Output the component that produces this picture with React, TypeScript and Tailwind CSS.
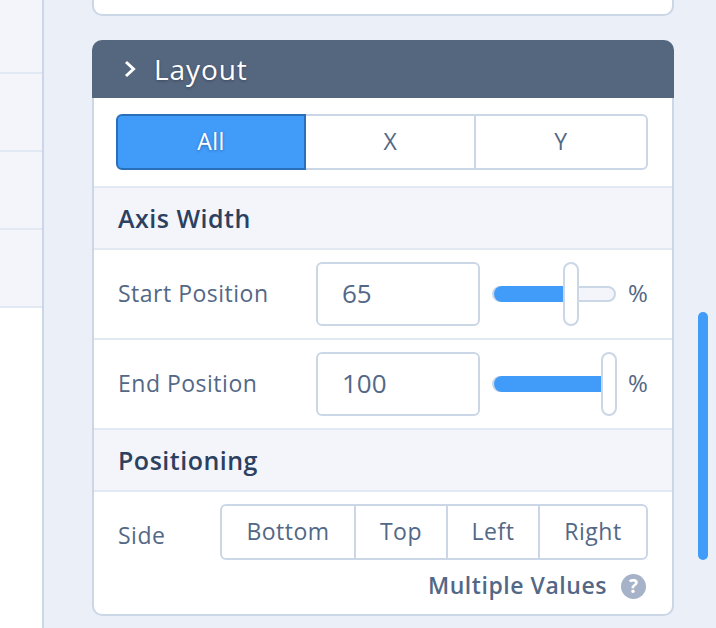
const SliderRow = ({ label, value, thumbLeft }: { label: string; value: string; thumbLeft: number }) => (
  <div className="flex h-[90px] items-center border-b-2 border-[#e3e9f3] pl-[24px]">
    <span className="w-[198px] pb-[2px] text-[23px] tracking-[0.5px] text-[#536886]">{label}</span>
    <div className="flex h-[64px] w-[164px] items-center rounded-[6px] border-2 border-[#cbd6e6] pb-[2px] pl-[24px] text-[26px] text-[#536886]">
      {value}
    </div>
    <div className="relative ml-[12px] h-[64px] w-[126px]">
      <div className="absolute left-0 top-[24px] h-[16px] w-[124px] rounded-full border-2 border-[#cbd6e6] bg-[#f3f5fb]" />
      <div className="absolute left-[2px] top-[24px] h-[16px] rounded-l-full bg-[#419bf9]" style={{ width: thumbLeft - 2 }} />
      <div
        className="absolute top-0 h-[64px] w-[16px] rounded-full border-2 border-[#cbd6e6] bg-white"
        style={{ left: thumbLeft }}
      />
    </div>
    <span className="ml-[10px] pb-[2px] text-[24px] text-[#536886]">%</span>
  </div>
)

const SectionHeader = ({ title }: { title: string }) => (
  <div className="flex h-[62px] items-center border-b-2 border-[#e3e9f3] bg-[#f3f5fb] pl-[24px] pt-[2px] text-[25px] font-semibold tracking-[0.5px] text-[#2c4060]">
    {title}
  </div>
)

const axisButtons = [
  { label: 'X', width: 'w-[170px]' },
  { label: 'Y', width: 'flex-1' },
]

const sideButtons = [
  { label: 'Bottom', width: 'w-[134px]', border: 'border-r-2' },
  { label: 'Top', width: 'w-[92px]', border: 'border-r-2' },
  { label: 'Left', width: 'w-[92px]', border: 'border-r-2' },
  { label: 'Right', width: 'flex-1', border: '' },
]

export default function App() {
  return (
    <div className="flex h-[628px] w-[716px] overflow-hidden bg-[#ebf0f8] font-['Open_Sans',sans-serif]">
      {/* Left list */}
      <div className="h-full w-[44px] shrink-0 border-r-2 border-[#cbd6e6] bg-white">
        <div className="h-[74px] border-b-2 border-[#e3e9f3] bg-[#f3f5fb]" />
        <div className="h-[78px] border-b-2 border-[#e3e9f3] bg-[#f3f5fb]" />
        <div className="h-[78px] border-b-2 border-[#e3e9f3] bg-[#f3f5fb]" />
        <div className="h-[78px] border-b-2 border-[#e3e9f3] bg-[#f3f5fb]" />
      </div>

      {/* Panel */}
      <div className="relative flex-1 pl-[48px]">
        <div className="h-[16px] w-[582px] rounded-b-[10px] border-x-2 border-b-2 border-[#cbd6e6] bg-white" />

        <div className="mt-[24px] w-[582px]">
          <div className="flex h-[58px] items-center rounded-t-[10px] bg-[#55667f] pl-[32px] text-[28px] font-medium tracking-[0.9px] text-white [text-shadow:0_1px_3px_rgba(0,0,0,0.3)]">
            <svg width="12" height="18" viewBox="0 0 12 18" fill="none" stroke="white" strokeWidth="3" className="mr-[18px]">
              <polyline points="2,2 9.5,9 2,16" />
            </svg>
            Layout
          </div>

          <div className="rounded-b-[10px] border-x-2 border-b-2 border-[#cbd6e6] bg-white">
            <div className="flex h-[90px] items-center border-b-2 border-[#e3e9f3] pl-[22px]">
              <div className="flex h-[56px] w-[532px]">
                <div className="flex w-[190px] items-center justify-center rounded-l-[6px] border-2 border-[#2a70b8] bg-[#419bf9] pb-[2px] text-[23px] font-medium tracking-[0.5px] text-white [text-shadow:0_1px_3px_rgba(0,0,0,0.3)]">
                  All
                </div>
                <div className="flex flex-1 rounded-r-[6px] border-y-2 border-r-2 border-[#cbd6e6] text-[23px] tracking-[0.5px] text-[#536886]">
                  {axisButtons.map((b, i) => (
                    <div
                      key={b.label}
                      className={`flex items-center justify-center pb-[2px] ${b.width} ${i === 0 ? 'border-r-2 border-[#cbd6e6] pl-[1px]' : ''}`}
                    >
                      {b.label}
                    </div>
                  ))}
                </div>
              </div>
            </div>

            <SectionHeader title="Axis Width" />
            <SliderRow label="Start Position" value="65" thumbLeft={71} />
            <SliderRow label="End Position" value="100" thumbLeft={109} />
            <SectionHeader title="Positioning" />

            <div className="pl-[24px] pr-[24px] pt-[12px]">
              <div className="flex h-[56px] items-center">
                <span className="w-[102px] pt-[6px] text-[23px] tracking-[0.5px] text-[#536886]">Side</span>
                <div className="flex h-[56px] flex-1 rounded-[6px] border-2 border-[#cbd6e6] text-[23px] tracking-[0.5px] text-[#536886]">
                  {sideButtons.map((b) => (
                    <div key={b.label} className={`flex items-center justify-center border-[#cbd6e6] pb-[2px] ${b.width} ${b.border}`}>
                      {b.label}
                    </div>
                  ))}
                </div>
              </div>
              <div className="flex h-[54px] items-center justify-end pb-[2px] pr-[2px]">
                <span className="pb-[2px] text-[23px] font-semibold tracking-[0.55px] text-[#536886]">Multiple Values</span>
                <span className="ml-[14px] flex h-[25px] w-[25px] items-center justify-center rounded-full bg-[#a5b2c7] text-[19px] font-bold text-white">
                  ?
                </span>
              </div>
            </div>
          </div>
        </div>

        {/* Scrollbar */}
        <div className="absolute left-[654px] top-[312px] h-[248px] w-[10px] rounded-full bg-[#419bf9]" />
      </div>
    </div>
  )
}
